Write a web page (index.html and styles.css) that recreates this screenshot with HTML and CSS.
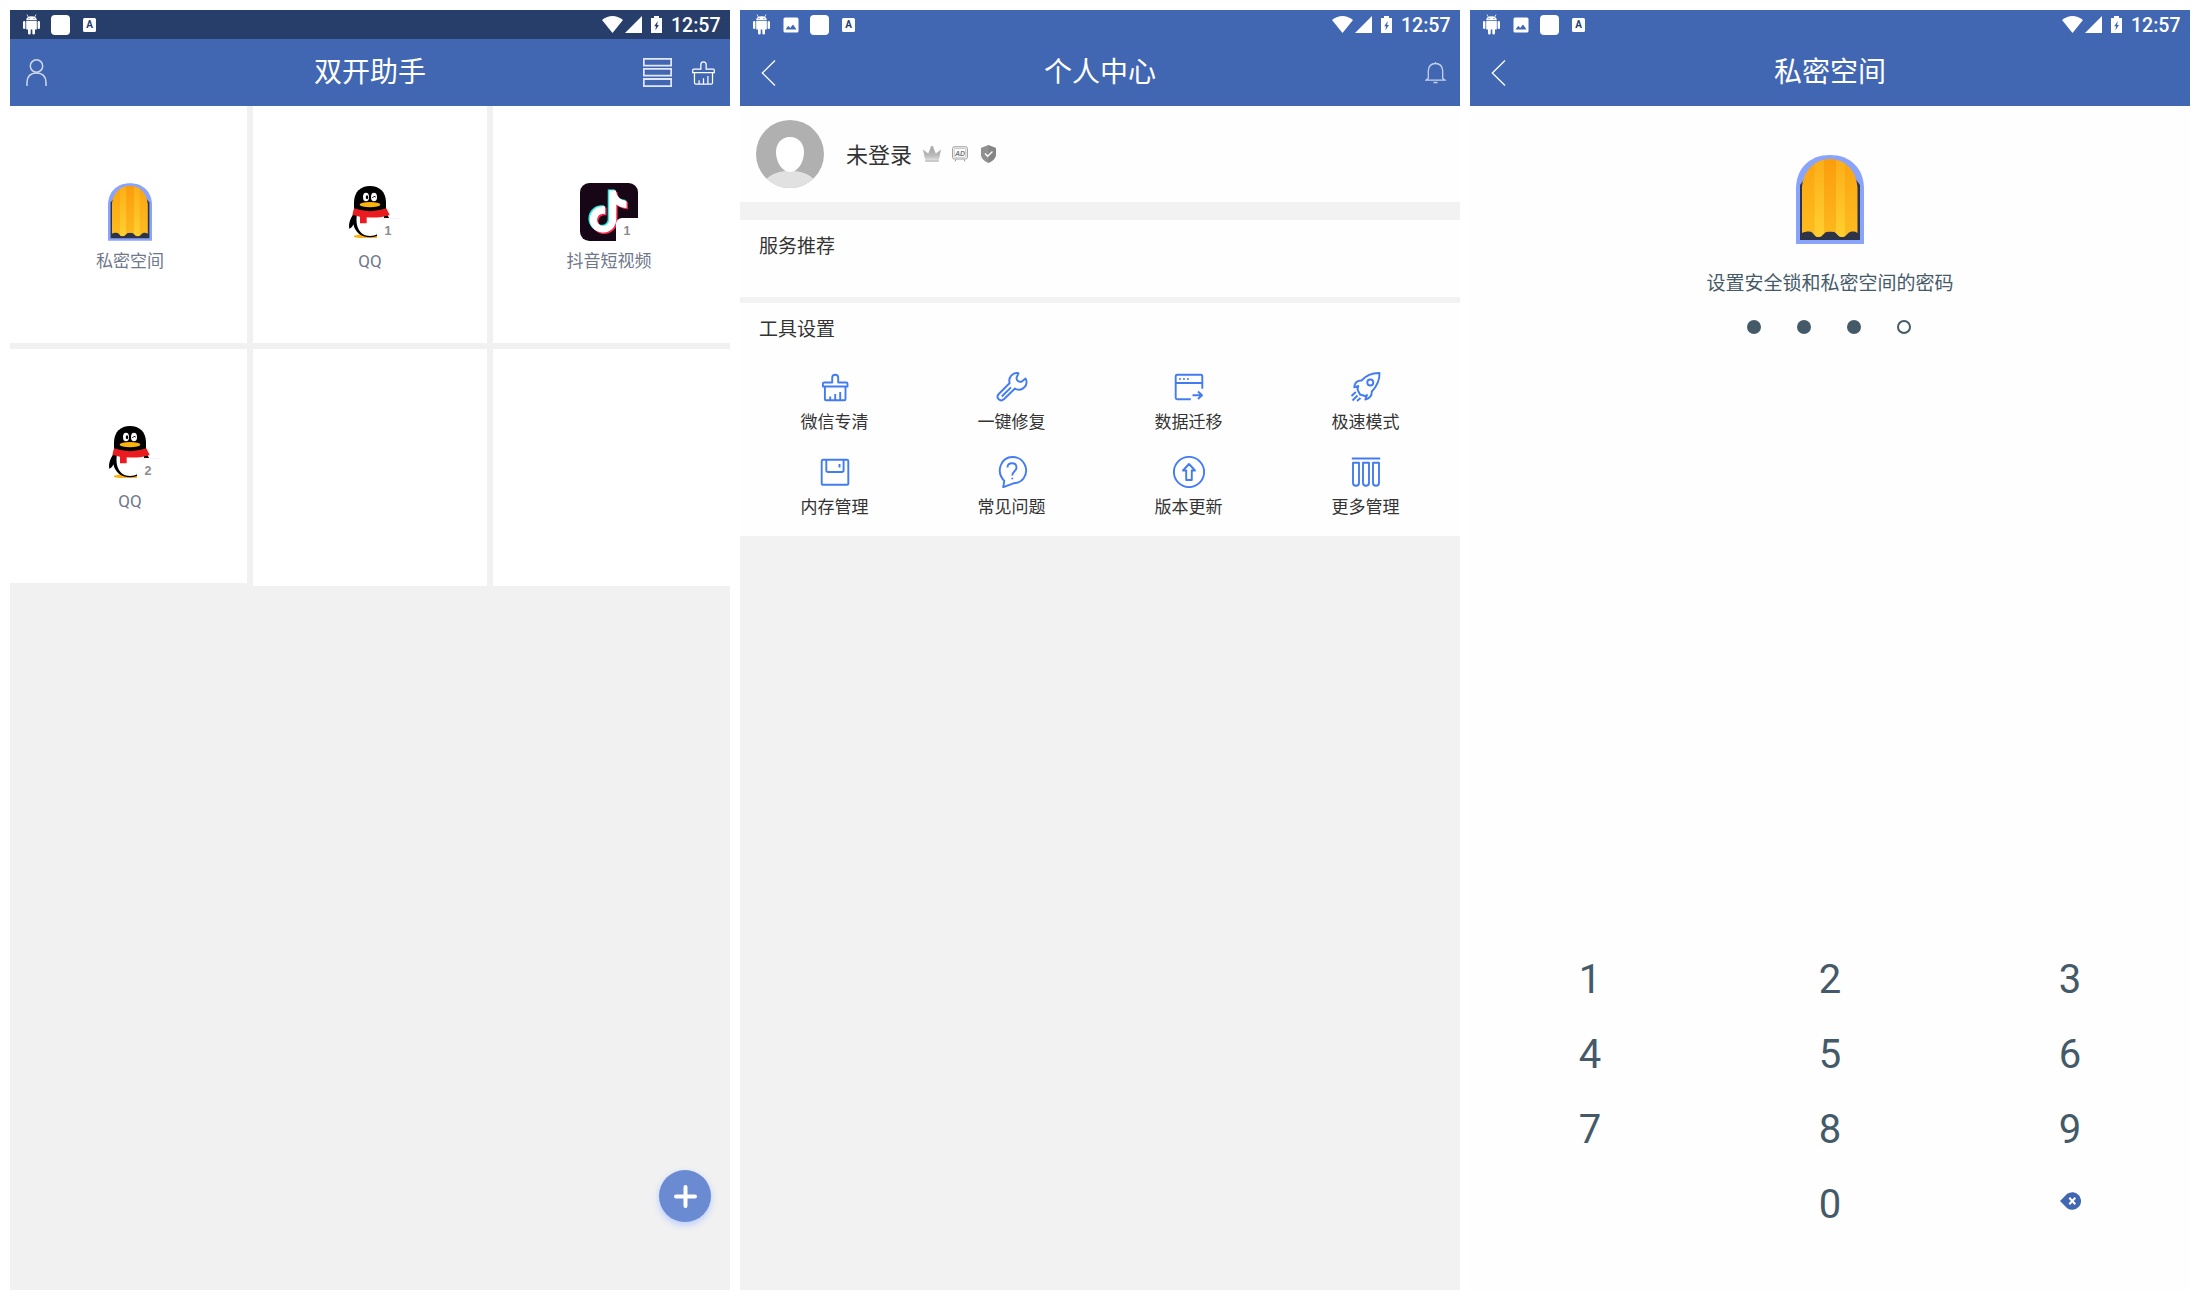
FILE: index.html
```html
<!DOCTYPE html>
<html lang="zh-CN">
<head>
<meta charset="utf-8">
<title>双开助手</title>
<link rel="stylesheet" href="styles.css">
</head>
<body>
<svg class="sprite" aria-hidden="true">
  <defs>
    <linearGradient id="gold" x1="0" y1="0" x2="0" y2="1"><stop offset="0" stop-color="#fba40f"/><stop offset="1" stop-color="#fdbd20"/></linearGradient>
    <linearGradient id="gold-light" x1="0" y1="0" x2="0" y2="1"><stop offset="0" stop-color="#fcae19"/><stop offset="1" stop-color="#ffd030"/></linearGradient>
    <linearGradient id="gold-deep" x1="0" y1="0" x2="0" y2="1"><stop offset="0" stop-color="#fb9d0c"/><stop offset="1" stop-color="#fdb91e"/></linearGradient>
    <linearGradient id="silver" x1="0" y1="0" x2="0" y2="1"><stop offset="0" stop-color="#a4a4a4"/><stop offset=".7" stop-color="#bcbcbc"/><stop offset="1" stop-color="#d8d8d8"/></linearGradient>
    <clipPath id="drape"><path d="M6 78V32C8 14 20 4.300 34 4.300S60 14 61.500 32v46c-2-1.500-4-1.800-6-1.500-4 .5-5 5.500-9.500 5.500s-5-5.500-10-5.500h-3.500c-5 0-5.500 5.500-10 5.500s-5-5.500-9.500-5.500c-3 0-5 .5-7 1.500z"/></clipPath>
    <clipPath id="round"><circle cx="34" cy="34" r="34"/></clipPath>
  </defs>
  <symbol id="android" viewBox="0 0 17 21">
    <path d="M3.200 6.300C3.200 3.700 5.300 2.300 8.500 2.300s5.300 1.400 5.300 4z"/>
    <path d="M5.300 3 4 .5M11.700 3 13 .5" stroke="#fff" stroke-width=".8"/>
    <path d="M3.200 7h10.600v8.500H3.200zM0 8.200Q0 7 1.200 7t1.200 1.200v5.600Q2.400 15 1.200 15T0 13.800zM14.600 8.200q0-1.200 1.200-1.200T17 8.200v5.600q0 1.200-1.200 1.200t-1.200-1.200zM5 15h2.700v4.300q0 1.200-1.300 1.200T5 19.300zM9.300 15H12v4.300q0 1.200-1.300 1.200t-1.400-1.200z"/>
    <circle class="eye" cx="6" cy="4.600" r=".55"/><circle class="eye" cx="11" cy="4.600" r=".55"/>
  </symbol>
  <symbol id="photo" viewBox="0 0 16 16"><path fill-rule="evenodd" d="M2 .5h12Q15.500.5 15.500 2v12q0 1.500-1.500 1.500H2Q.5 15.500.5 14V2Q.5.500 2 .5zM2.500 12.500h11L10 7.500l-2.800 3.400-1.900-2.200z"/></symbol>
  <symbol id="wifi" viewBox="0 0 21 17"><path d="M0 4Q10.500-4 21 4L10.500 17z"/></symbol>
  <symbol id="signal" viewBox="0 0 17 17"><path d="M17 0v17H0z"/></symbol>
  <symbol id="battery" viewBox="0 0 11 17"><path fill-rule="evenodd" d="M3 0h5v2h3v15H0V2h3zM6.800 5 3.200 10.300H5l-.6 4L8 9H6.100z"/></symbol>
  <symbol id="user" viewBox="0 0 21 27"><circle cx="10.500" cy="7" r="6.200"/><path d="M1 27v-3.500Q1.300 14 10.500 14T20 23.500V27"/></symbol>
  <symbol id="rows" viewBox="0 0 29 29"><path d="M.8.800h27.400v6.800H.8zM.8 10.900h27.400v6.800H.8zM.8 21h27.400v7.200H.8z"/></symbol>
  <symbol id="brush" viewBox="0 0 26 27"><path d="M10 9V4.200Q10 .8 13 .8t3 3.400V9h8.200q1 0 1 1v3H.8v-3q0-1 1-1zM2.800 13v11.500q0 1.500 1.500 1.500h17.400q1.500 0 1.500-1.500V13M8 26v-4.300M13 26v-6.500M18 26v-9"/></symbol>
  <symbol id="back" viewBox="0 0 15 26"><path d="M14 .5 1.300 13 14 25.500"/></symbol>
  <symbol id="bell" viewBox="0 0 21 23"><path d="M10.500 1v1.200M3.300 17.500V9.800Q3.800 2.500 10.500 2.500t7.200 7.300v7.700l2.500 1.700H.8zM8.500 21.500h4"/></symbol>
  <symbol id="curtain" viewBox="0 0 68 89">
    <path fill="#8aa4fb" d="M0 89V34C0 13 14 0 34 0s34 13 34 34v55z"/>
    <path fill="#2e3448" d="M4 85V30l6-8h48l6 8v55z"/>
    <g clip-path="url(#drape)"><path fill="url(#gold)" d="M5 4h58v79H5z"/><path fill="url(#gold-light)" d="M18.500 4H28v79h-9.500zM40 4h9v79h-9z"/><path fill="url(#gold-deep)" d="M28 4h12v79H28z"/></g>
  </symbol>
  <symbol id="penguin" viewBox="0 0 174 174">
    <ellipse cx="56" cy="160" rx="18" ry="5" fill="#fdb40c"/><path d="M50 155h62v10H56z" fill="#fdb40c"/>
    <path d="M40 90C28 104 22 122 25 137c6-1 10-7 12-13 5 23 23 39 50 39s45-16 50-39c3 6 8 12 12 13 3-15-2-33-15-47z"/>
    <path d="M39 80V58C39 27 59 9 87 9s48 18 48 49v22q-48 20-96 0z"/>
    <path d="M48 94h80c6 34-8 65-41 65S42 128 48 94z" fill="#fff"/>
    <path d="M39 76q48 17 97 0l10 20q-27 10-69 7v18H57v-20l-23-6z" fill="#ea1c1f"/>
    <ellipse cx="75" cy="42" rx="9" ry="13" fill="#fff"/><ellipse cx="99" cy="42" rx="9" ry="13" fill="#fff"/>
    <ellipse cx="78" cy="43" rx="3.500" ry="6"/><path d="m94 45 5-5 5 2" fill="none" stroke="#000" stroke-width="3"/>
    <ellipse cx="87" cy="65" rx="31" ry="8" fill="#fdb40c"/>
  </symbol>
  <symbol id="note" viewBox="0 0 24 24"><path d="M12.525.02c1.310-.02 2.610-.01 3.910-.02.08 1.530.63 3.090 1.750 4.170 1.120 1.110 2.700 1.620 4.240 1.790v4.030c-1.440-.05-2.890-.35-4.200-.97-.57-.26-1.100-.59-1.620-.93-.01 2.920.01 5.840-.02 8.750-.08 1.400-.54 2.790-1.350 3.940-1.310 1.920-3.580 3.170-5.910 3.210-1.430.08-2.860-.31-4.080-1.030-2.020-1.190-3.440-3.370-3.650-5.710-.02-.5-.03-1-.01-1.490.18-1.900 1.120-3.720 2.580-4.960 1.660-1.440 3.980-2.130 6.150-1.720.02 1.480-.04 2.960-.04 4.440-.99-.32-2.150-.23-3.020.37-.63.41-1.110 1.040-1.360 1.750-.21.51-.15 1.070-.14 1.610.24 1.640 1.820 3.020 3.500 2.870 1.120-.01 2.190-.66 2.770-1.610.19-.33.4-.67.41-1.060.1-1.790.06-3.570.07-5.360.01-4.030-.01-8.050.02-12.070z"/></symbol>
</svg>

<main class="screens">
  <section class="phone phone-home">
    <header class="status status-dark">
      <div class="status-left">
        <svg class="s-android"><use href="#android"/></svg><i class="s-square"></i><span class="s-letter">A</span>
      </div>
      <div class="status-right">
        <svg class="s-wifi"><use href="#wifi"/></svg><svg class="s-signal"><use href="#signal"/></svg><svg class="s-battery"><use href="#battery"/></svg><time>12:57</time>
      </div>
    </header>
    <nav class="bar bar-home">
      <svg class="line i-user"><use href="#user"/></svg>
      <h1>双开助手</h1>
      <div class="bar-actions"><svg class="line i-rows"><use href="#rows"/></svg><svg class="line i-brush"><use href="#brush"/></svg></div>
    </nav>
    <div class="apps">
      <div class="app"><div class="app-icon"><svg class="curtain-small"><use href="#curtain"/></svg></div><p>私密空间</p></div>
      <div class="app"><div class="app-icon"><svg class="app-art"><use href="#penguin"/></svg><b class="badge badge-line">1</b></div><p>QQ</p></div>
      <div class="app"><div class="app-icon">
        <svg class="app-art" viewBox="0 0 174 174"><rect width="174" height="174" rx="28" fill="#170616"/><use href="#note" x="17" y="19" width="127" height="127" fill="#25eee6"/><use href="#note" x="25" y="26" width="127" height="127" fill="#fe2c50"/><use href="#note" x="21" y="22" width="127" height="127" fill="#fff"/></svg>
        <b class="badge">1</b></div><p>抖音短视频</p></div>
      <div class="app app-last"><div class="app-icon"><svg class="app-art"><use href="#penguin"/></svg><b class="badge badge-line">2</b></div><p>QQ</p></div>
      <div class="app"></div>
      <div class="app"></div>
    </div>
    <button class="fab" aria-label="添加"><svg viewBox="0 0 23 23"><path d="M11.500 2v19M2 11.500h19"/></svg></button>
  </section>

  <section class="phone phone-profile">
    <header class="status">
      <div class="status-left">
        <svg class="s-android"><use href="#android"/></svg><svg class="s-photo"><use href="#photo"/></svg><i class="s-square"></i><span class="s-letter">A</span>
      </div>
      <div class="status-right">
        <svg class="s-wifi"><use href="#wifi"/></svg><svg class="s-signal"><use href="#signal"/></svg><svg class="s-battery"><use href="#battery"/></svg><time>12:57</time>
      </div>
    </header>
    <nav class="bar">
      <svg class="line i-back"><use href="#back"/></svg>
      <h1>个人中心</h1>
      <svg class="line i-bell"><use href="#bell"/></svg>
    </nav>
    <div class="account">
      <svg class="avatar" viewBox="0 0 68 68"><g clip-path="url(#round)"><path fill="#b0b0b0" d="M0 0h68v68H0z"/><path fill="#e1e1e1" d="M29 47v4q-12 1-20 9v8h50v-8q-8-8-20-9v-4z"/><path fill="#fff" d="M34 17c9 0 14 7 14 15 0 10-6 20-14 20s-14-10-14-20c0-8 5-15 14-15z"/></g></svg>
      <strong>未登录</strong>
      <svg class="crown" viewBox="0 0 18 16"><path fill="url(#silver)" d="M0 3.500 5.200 7.500 8 1h2l2.800 6.500L18 3.500l-2 10H2z"/><path fill="#cacaca" d="M2.200 13.500h13.600V16H2.200z"/><circle cx="9" cy="1.300" r="1.300" fill="#aaa"/></svg>
      <svg class="ad" viewBox="0 0 16 16"><rect x=".6" y=".8" width="14.800" height="12.200" rx="1.800"/><rect x="2.300" y="2.500" width="11.400" height="8.800" rx=".6" class="thin"/><path d="m4 13.500-1 2M12 13.500l1 2"/><text x="3" y="9.800">AD</text></svg>
      <svg class="shield" viewBox="0 0 15 18"><path fill="#858585" d="M7.500 0 15 3v7.500Q14 15 7.500 18 1 15 0 10.500V3z"/><path fill="#a5a5a5" d="M7.500 0v18Q1 15 0 10.500V3z" opacity=".35"/><path d="m4 8.500 2.700 2.700L11.500 6.500" fill="none" stroke="#fff" stroke-width="1.400"/></svg>
    </div>
    <div class="panel services"><h2>服务推荐</h2></div>
    <div class="panel tools">
      <h2>工具设置</h2>
      <div class="tool-grid">
        <div class="tool"><svg viewBox="0 0 32 32"><path d="M13.200 11.500V6.700q0-3 3-3t3 3v4.800h8q1.300 0 1.300 1.300v2.700H3.900v-2.700q0-1.300 1.300-1.300zM5.900 15.500v12.700q0 1 1 1h18.600q1 0 1-1V15.500M11.200 29v-3.500M16.200 29v-6M21.200 29v-8"/></svg><span>微信专清</span></div>
        <div class="tool"><svg viewBox="0 0 32 32"><path d="M22.500 2.300A7.500 7.500 0 0 0 13.700 12L2.800 23c-3.500 4 1.500 8.500 5.300 5L19 17.500A7.500 7.500 0 0 0 29.500 7.500l-4 3.200c-3 .5-5-1-5-4zM5.800 25.500 15 16.300"/></svg><span>一键修复</span></div>
        <div class="tool"><svg viewBox="0 0 32 32"><path d="M17.800 28.200H4.200q-1.500 0-1.500-1.500V5.200q0-1.500 1.500-1.500h23.600q1.500 0 1.500 1.500v12.500M2.700 12h26.600M19.500 24.200h9M25 20.500l4 3.700-4 3.800M6.200 8h1.500M10.200 8h1.500M14.200 8h1.500"/></svg><span>数据迁移</span></div>
        <div class="tool"><svg viewBox="0 0 32 32"><path d="M29.500 2C21 1.800 16 4.500 11.500 9.500 7 9.500 4.500 12 4.300 16.300l4-1.300-.8 3.500 2.500 5 5 1.500 2-1-1.700 4.500c4.500-1 6.700-3.500 6.500-8C27 15 29.800 10 29.500 2zM5.800 21l-4.300 4M7.500 24.500l-5 5M10.500 27l-3.500 3"/><circle cx="20.300" cy="11.500" r="3"/></svg><span>极速模式</span></div>
        <div class="tool"><svg viewBox="0 0 32 32"><path d="M4.200 3.700h23.600q1.500 0 1.500 1.500v22.600q0 1-1 1H3.700q-1 0-1-1V5.200q0-1.500 1.500-1.500zM7.300 4v10.200q0 1.800 1.800 1.800h13.700q1.800 0 1.800-1.800V4M20.500 8v3.500"/></svg><span>内存管理</span></div>
        <div class="tool"><svg viewBox="0 0 32 32"><path d="M7.200 31.200 8.300 25C-1 15 5.500 1 16.500 1S34 13 27.500 22.500C25 26 21 27 17.500 27.300zM11.500 11.500Q11.500 7.300 16 7.300t4.500 4.200c0 4-4.200 3.500-4.200 8M16.300 21.800v1.500"/></svg><span>常见问题</span></div>
        <div class="tool"><svg viewBox="0 0 32 32"><circle cx="16" cy="16" r="15.100"/><path d="m16 8 6 6.500h-3.200V24h-5.600v-9.500H10z"/></svg><span>版本更新</span></div>
        <div class="tool"><svg viewBox="0 0 32 32"><path d="M1.800 2.500h28.400M3 6.800h6v20q0 3-3 3t-3-3zM13 6.800h6v20q0 3-3 3t-3-3zM23 6.800h6v20q0 3-3 3t-3-3z"/></svg><span>更多管理</span></div>
      </div>
    </div>
  </section>

  <section class="phone phone-lock">
    <header class="status">
      <div class="status-left">
        <svg class="s-android"><use href="#android"/></svg><svg class="s-photo"><use href="#photo"/></svg><i class="s-square"></i><span class="s-letter">A</span>
      </div>
      <div class="status-right">
        <svg class="s-wifi"><use href="#wifi"/></svg><svg class="s-signal"><use href="#signal"/></svg><svg class="s-battery"><use href="#battery"/></svg><time>12:57</time>
      </div>
    </header>
    <nav class="bar">
      <svg class="line i-back"><use href="#back"/></svg>
      <h1>私密空间</h1>
      <i></i>
    </nav>
    <div class="lock">
      <svg class="curtain-large"><use href="#curtain"/></svg>
      <p>设置安全锁和私密空间的密码</p>
      <div class="dots"><i class="on"></i><i class="on"></i><i class="on"></i><i></i></div>
      <div class="keys">
        <span>1</span><span>2</span><span>3</span>
        <span>4</span><span>5</span><span>6</span>
        <span>7</span><span>8</span><span>9</span>
        <span></span><span>0</span>
        <span><svg class="erase" viewBox="0 0 21 18"><path fill="#4267b2" d="M0 9 7.200 1.800A8.800 8.800 0 1 1 7.200 16.200z"/><path d="m9.300 5.800 6 6.400M15.300 5.800l-6 6.400" stroke="#fff" stroke-width="2"/></svg></span>
      </div>
    </div>
  </section>
</main>
</body>
</html>
```
FILE: styles.css
```css
* { box-sizing: border-box; }
body {
  margin: 0;
  background: #fff;
  font-family: Roboto, "Noto Sans CJK SC", sans-serif;
  color: #333;
}
h1, h2, p { margin: 0; font-weight: 400; }
svg { display: block; flex: none; }
.sprite { position: absolute; width: 0; height: 0; }
.screens { display: flex; gap: 10px; padding: 10px; width: 2200px; height: 1300px; }
.phone { width: 720px; height: 1280px; display: flex; flex-direction: column; position: relative; }
.phone-home { background: #f1f1f1; }
.phone-profile { background: #f2f2f2; }
.phone-lock { background: #fefefe; }

/* system status bar */
.status {
  height: 29px;
  display: flex;
  justify-content: space-between;
  padding: 0 11px 0 13px;
  background: #4267b2;
  color: #fff;
  fill: #fff;
}
.status-dark { background: #283e6a; }
.status-left, .status-right { display: flex; align-items: center; }
.status-left { gap: 12px; }
.s-android { width: 17px; height: 21px; }
.s-android + .s-square { margin-left: -1px; }
.eye { fill: #4267b2; }
.s-photo { width: 16px; height: 16px; margin: 0 -1px 0 1px; }
.s-square { width: 19px; height: 20px; border-radius: 4px; background: #fff; }
.s-letter {
  width: 13px;
  height: 14px;
  border-radius: 1.500px;
  background: #fff;
  color: #283e6a;
  font: 700 10px/14px Roboto, sans-serif;
  text-align: center;
  margin-left: 1px;
}
.s-wifi { width: 21px; height: 17px; }
.s-signal { width: 17px; height: 17px; margin-left: 2px; }
.s-battery { width: 11px; height: 17px; margin-left: 9px; }
.status time { font-size: 19.500px; font-weight: 500; line-height: 29px; margin-left: 9px; padding-top: 2px; width: 48px; white-space: nowrap; }

/* title bar */
.bar {
  height: 67px;
  display: grid;
  grid-template-columns: 100px 1fr 100px;
  align-items: center;
  padding: 0 14px 0 21px;
  background: #4267b2;
  color: #fff;
}
.bar-home { padding: 0 15px 0 16px; }
.bar h1 { font-size: 28px; line-height: 66px; text-align: center; padding: 1px 7px 0 0; }
.bar-home h1 { padding-right: 1px; }
.line { fill: none; stroke: #fff; stroke-width: 1.300; }
.i-user { width: 21px; height: 27px; opacity: .75; stroke-width: 1.500; }
.bar-actions { display: flex; align-items: center; justify-content: flex-end; gap: 20px; }
.i-rows { width: 29px; height: 29px; opacity: .85; stroke-width: 1.800; }
.i-brush { width: 23px; height: 24px; stroke-width: 1.400; }
.i-back { width: 15px; height: 26px; }
.i-bell { width: 21px; height: 23px; justify-self: end; opacity: .7; }

/* cloned apps */
.apps { display: grid; grid-template-columns: repeat(3, 240px); grid-auto-rows: 240px; }
.app {
  display: flex;
  flex-direction: column;
  align-items: center;
  background: #fff;
  padding-top: 77px;
}
.app:nth-child(3n+1) { border-right: 3px solid #f1f1f1; padding-left: 3px; }
.app:nth-child(3n+2) { border: solid #f1f1f1; border-width: 0 3px; }
.app:nth-child(3n) { border-left: 3px solid #f1f1f1; padding-right: 5px; }
.app:nth-child(-n+3) { border-bottom: 3px solid #f1f1f1; }
.app:nth-child(n+4) { border-top: 3px solid #f1f1f1; padding-top: 74px; }
.app-last { border-bottom: 3px solid #f1f1f1; }
.app-icon { width: 58px; height: 58px; position: relative; display: flex; justify-content: center; }
.curtain-small { width: 44px; height: 58px; }
.app-art { width: 58px; height: 58px; }
.app p { font-size: 17px; line-height: 24px; margin-top: 8px; color: #6f778b; }
.badge {
  position: absolute;
  right: 0;
  bottom: 0;
  width: 22px;
  height: 23px;
  border-radius: 6px 0 0 0;
  background: #fff;
  color: #8b8b8b;
  font: 700 12.500px/26px "Liberation Sans", sans-serif;
  text-align: center;
}
.badge-line { border-top: 1px solid #f4f4f4; line-height: 25px; }
.fab {
  position: absolute;
  right: 19px;
  bottom: 68px;
  width: 52px;
  height: 52px;
  padding: 0;
  border: 0;
  border-radius: 50%;
  background: #6a8ad2;
  box-shadow: 0 3px 7px #b7cbff;
  display: grid;
  place-items: center;
}
.fab svg { width: 23px; height: 23px; fill: none; stroke: #fff; stroke-width: 4; stroke-linecap: round; }

/* profile */
.account { height: 96px; background: #fefefe; display: flex; align-items: center; padding: 0 16px; }
.avatar { width: 68px; height: 68px; }
.account strong { font-size: 22px; font-weight: 400; line-height: 32px; margin: 3px 0 0 22px; }
.crown { width: 18px; height: 16px; margin-left: 11px; }
.ad { width: 16px; height: 16px; margin-left: 11px; fill: none; stroke: #999; stroke-width: 1; }
.ad .thin { stroke-width: .5; }
.ad text { font: italic 700 7px "Liberation Sans", sans-serif; fill: #777; stroke: none; }
.shield { width: 15px; height: 18px; margin-left: 13px; }
.panel { background: #fefefe; }
.panel h2 { font-size: 19px; line-height: 28px; padding-left: 19px; }
.services { height: 77px; margin-top: 18px; padding-top: 13px; }
.tools { height: 233px; margin-top: 6px; padding-top: 13px; }
.tool-grid { display: grid; grid-template-columns: repeat(4, 177px); grid-auto-rows: 85px; padding: 27px 6px 0 6px; }
.tool { display: flex; flex-direction: column; align-items: center; }
.tool svg { width: 32px; height: 32px; fill: none; stroke: #437cf0; stroke-width: 1.900; stroke-linejoin: round; }
.tool span { font-size: 17px; line-height: 24px; margin-top: 7px; }

/* pin lock */
.lock { display: flex; flex-direction: column; align-items: center; padding-top: 49px; color: #455a69; }
.curtain-large { width: 68px; height: 89px; }
.lock p { font-size: 19px; line-height: 28px; margin-top: 26px; }
.dots { display: flex; gap: 36px; margin: 22px 0 0 -2px; }
.dots i { width: 14px; height: 14px; border: 2px solid #455a69; border-radius: 50%; }
.dots .on { background: #455a69; }
.keys { display: grid; grid-template-columns: repeat(3, 240px); grid-auto-rows: 75px; margin-top: 608px; }
.keys span { display: grid; place-items: center; font-size: 40px; line-height: 75px; }
.erase { width: 21px; height: 18px; margin-top: -7px; }
```
